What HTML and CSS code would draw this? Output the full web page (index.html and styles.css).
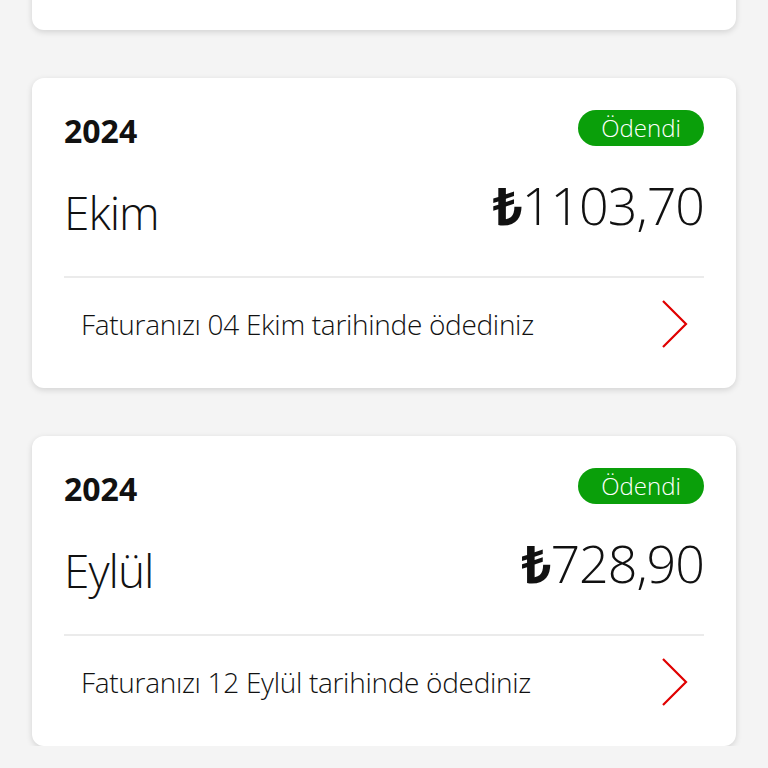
FILE: index.html
```html
<!DOCTYPE html>
<html lang="tr">
<head>
    <meta charset="UTF-8">
    <meta name="viewport" content="width=device-width, initial-scale=1.0">
    <title>Faturalarım</title>
    <link rel="stylesheet" href="styles.css">
</head>
<body>
    <div class="bill-list">
        <div class="bill-card bill-card-cut"></div>

        <div class="bill-card">
            <div class="bill-top">
                <span class="bill-year">2024</span>
                <span class="bill-status">Ödendi</span>
            </div>
            <div class="bill-main">
                <span class="bill-month">Ekim</span>
                <span class="bill-amount"><b>₺</b>1103,70</span>
            </div>
            <div class="bill-foot">
                <span class="bill-note">Faturanızı 04 Ekim tarihinde ödediniz</span>
                <svg class="chevron" width="30" height="50" viewBox="0 0 30 50">
                    <path d="M3 2 L26 25 L3 48" fill="none" stroke="#e00000" stroke-width="2.2"/>
                </svg>
            </div>
        </div>

        <div class="bill-card">
            <div class="bill-top">
                <span class="bill-year">2024</span>
                <span class="bill-status">Ödendi</span>
            </div>
            <div class="bill-main">
                <span class="bill-month">Eylül</span>
                <span class="bill-amount"><b>₺</b>728,90</span>
            </div>
            <div class="bill-foot">
                <span class="bill-note">Faturanızı 12 Eylül tarihinde ödediniz</span>
                <svg class="chevron" width="30" height="50" viewBox="0 0 30 50">
                    <path d="M3 2 L26 25 L3 48" fill="none" stroke="#e00000" stroke-width="2.2"/>
                </svg>
            </div>
        </div>
    </div>
</body>
</html>
```

FILE: styles.css
```css
body {
    margin: 0;
    background-color: #f4f4f4;
    font-family: "Open Sans", "Noto Sans", sans-serif;
    color: #111;
    overflow: hidden;
}
.bill-list {
    display: flex;
    flex-direction: column;
    gap: 48px;
    padding: 0 32px;
    margin-top: -40px;
}
.bill-card {
    background-color: #fff;
    border-radius: 12px;
    box-shadow: 0 2px 6px rgba(0, 0, 0, 0.14);
    padding: 32px 32px 0;
}
.bill-card-cut {
    height: 70px;
    padding: 0;
}
.bill-top {
    display: flex;
    justify-content: space-between;
    align-items: flex-start;
    height: 36px;
}
.bill-year {
    font-size: 32px;
    font-weight: 700;
    line-height: 36px;
    padding-top: 3px;
}
.bill-status {
    background-color: #0a9f0a;
    color: #fff;
    font-size: 24px;
    font-weight: 300;
    width: 126px;
    height: 36px;
    line-height: 35px;
    text-align: center;
    border-radius: 18px;
}
.bill-main {
    display: flex;
    justify-content: space-between;
    align-items: flex-start;
    height: 132px;
    border-bottom: 2px solid #ebebeb;
    box-sizing: border-box;
}
.bill-month {
    font-size: 46px;
    font-weight: 300;
    line-height: 46px;
    letter-spacing: -1px;
    margin-top: 43px;
}
.bill-amount {
    font-size: 52px;
    font-weight: 300;
    line-height: 52px;
    letter-spacing: -1px;
    margin-top: 33px;
}
.bill-amount b {
    font-weight: 700;
}
.bill-foot {
    display: flex;
    justify-content: space-between;
    align-items: center;
    height: 110px;
    box-sizing: border-box;
    padding: 0 14px 18px 17px;
}
.bill-note {
    font-size: 28px;
    font-weight: 300;
    letter-spacing: -0.3px;
}
```
